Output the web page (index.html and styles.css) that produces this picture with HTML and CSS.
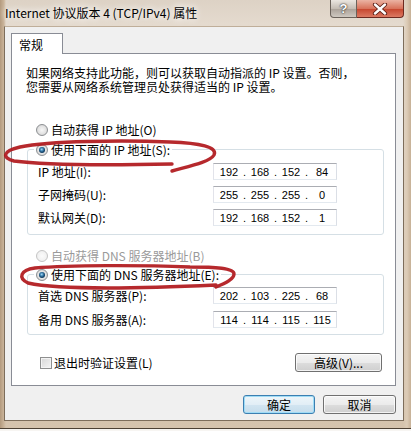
FILE: index.html
```html
<!DOCTYPE html>
<html>

<head>
    <title>Internet 协议版本 4 (TCP/IPv4) 属性</title>
    <link rel="stylesheet" href="styles.css">
</head>

<body>
    <div class="window">
        <div class="titlebar">
            <span class="title">Internet 协议版本 4 (TCP/IPv4) 属性</span>
            <div class="caption-btns">
                <span class="cap-help">?</span>
                <span class="cap-close">
                    <svg width="18" height="12" viewBox="0 0 18 12">
                        <path d="M4 1.5 L14 10.5 M14 1.5 L4 10.5" stroke="#5a1d14" stroke-width="4.2" stroke-linecap="round" />
                        <path d="M4 1.5 L14 10.5 M14 1.5 L4 10.5" stroke="#ffffff" stroke-width="2.4" stroke-linecap="round" />
                    </svg>
                </span>
            </div>
        </div>
        <div class="client">
            <div class="tabs"><span class="tab">常规</span></div>
            <div class="panel">
                <p class="intro">如果网络支持此功能，则可以获取自动指派的 IP 设置。否则，</p>
                <p class="intro next">您需要从网络系统管理员处获得适当的 IP 设置。</p>

                <div class="radio-row auto-ip"><span class="radio"></span>自动获得 IP 地址(O)</div>
                <div class="group group-ip">
                    <div class="radio-row caption"><span class="radio checked"></span>使用下面的 IP 地址(S):</div>
                    <div class="field-row first">
                        <span class="field-label">IP 地址(I):</span>
                        <span class="ip"><span class="oct">192</span><span class="dot">.</span><span class="oct">168</span><span class="dot">.</span><span class="oct">152</span><span class="dot">.</span><span class="oct">84</span></span>
                    </div>
                    <div class="field-row">
                        <span class="field-label">子网掩码(U):</span>
                        <span class="ip"><span class="oct">255</span><span class="dot">.</span><span class="oct">255</span><span class="dot">.</span><span class="oct">255</span><span class="dot">.</span><span class="oct">0</span></span>
                    </div>
                    <div class="field-row">
                        <span class="field-label">默认网关(D):</span>
                        <span class="ip"><span class="oct">192</span><span class="dot">.</span><span class="oct">168</span><span class="dot">.</span><span class="oct">152</span><span class="dot">.</span><span class="oct">1</span></span>
                    </div>
                </div>

                <div class="radio-row auto-dns disabled"><span class="radio"></span>自动获得 DNS 服务器地址(B)</div>
                <div class="group group-dns">
                    <div class="radio-row caption"><span class="radio checked"></span>使用下面的 DNS 服务器地址(E):</div>
                    <div class="field-row first">
                        <span class="field-label">首选 DNS 服务器(P):</span>
                        <span class="ip"><span class="oct">202</span><span class="dot">.</span><span class="oct">103</span><span class="dot">.</span><span class="oct">225</span><span class="dot">.</span><span class="oct">68</span></span>
                    </div>
                    <div class="field-row">
                        <span class="field-label">备用 DNS 服务器(A):</span>
                        <span class="ip"><span class="oct">114</span><span class="dot">.</span><span class="oct">114</span><span class="dot">.</span><span class="oct">115</span><span class="dot">.</span><span class="oct">115</span></span>
                    </div>
                </div>

                <div class="bottom-row">
                    <span class="check-label"><span class="checkbox"></span>退出时验证设置(L)</span>
                    <span class="btn advanced">高级(V)...</span>
                </div>
            </div>
            <div class="dialog-btns">
                <span class="btn ok">确定</span>
                <span class="btn cancel">取消</span>
            </div>
        </div>

        <!-- red marker drawn over the screenshot -->
        <svg class="marks" width="411" height="431" viewBox="0 0 411 431">
            <path d="M172,171 C190,166 210,162 214,155 C218,147 200,143 170,142 C120,140 50,141 20,147 C2,151 2,158 14,161 C50,166 120,165 172,164" />
            <path d="M216,287 C226,283 234,279 234,274 C234,268 215,267 190,267 C140,265 70,265 35,268 C20,270 18,278 28,283 C60,290 150,288 216,285" />
        </svg>
    </div>
</body>

</html>
```

FILE: styles.css
```css
html {
    --frameLight: #e4dace;
    --frameTan: #d5c3ad;
    --panelBorder: #898c95;
    --groupBorder: #d5dfe5;
    --text: #000000;
}

body {
    margin: 0;
    background: #f7f5f2;
    font-family: "Noto Sans CJK SC", "Liberation Sans", sans-serif;
    font-size: 12px;
    color: var(--text);
}

.window {
    position: relative;
    width: 411px;
    height: 429px;
    box-sizing: border-box;
    border-bottom: 1px solid #4d4134;
    background:
        linear-gradient(to right, #b39a7e 0, #cbb59b 4px, rgba(0, 0, 0, 0) 6px),
        linear-gradient(to left, #c6b096 0, #dccbb6 4px, rgba(0, 0, 0, 0) 8px),
        linear-gradient(to bottom, #ddd2c5 0, var(--frameLight) 24px, var(--frameTan) 100%);
    overflow: hidden;
}

/* title bar */

.titlebar {
    height: 26px;
    display: flex;
    justify-content: space-between;
    align-items: flex-start;
}

.title {
    padding: 5px 0 0 5px;
    font-size: 12px;
    line-height: 16px;
    text-shadow: 0 0 6px #ffffff, 0 0 10px #ffffff;
}

.caption-btns {
    display: flex;
    margin-right: 7px;
}

.cap-help,
.cap-close {
    height: 18px;
    box-sizing: border-box;
    display: flex;
    align-items: center;
    justify-content: center;
}

.cap-help {
    width: 27px;
    border: 1px solid #6b625a;
    border-top: none;
    border-radius: 0 0 0 4px;
    background: linear-gradient(#ebe6e0, #c5bdb4 50%, #a9a097 51%, #cfc8c0);
    color: #ffffff;
    font-family: "Liberation Sans", sans-serif;
    font-weight: bold;
    font-size: 13px;
    text-shadow: 0 0 2px #2d2a27, 0 0 1px #2d2a27;
}

.cap-close {
    width: 47px;
    border: 1px solid #6e2a20;
    border-top: none;
    border-left: none;
    border-radius: 0 0 4px 0;
    background: linear-gradient(#ebb3a3, #d8735b 50%, #c5442c 51%, #dc7a63);
}

/* client area */

.client {
    margin-left: 4px;
    width: 400px;
    height: 395px;
    box-sizing: border-box;
    border: 1px solid #7d6d5b;
    border-top-color: #bfae99;
    background: #f0f0f0;
}

.tabs {
    height: 26px;
    box-sizing: border-box;
    padding: 6px 0 0 6px;
}

.tab {
    position: relative;
    z-index: 1;
    display: inline-block;
    width: 52px;
    height: 21px;
    box-sizing: border-box;
    border: 1px solid var(--panelBorder);
    border-bottom: none;
    background: #ffffff;
    padding-left: 7px;
    line-height: 21px;
}

.panel {
    margin: 0 7px 0 6px;
    height: 333px;
    box-sizing: border-box;
    border: 1px solid var(--panelBorder);
    background: #ffffff;
    padding: 0 11px 0 14px;
    overflow: hidden;
}

.intro {
    margin: 12px 0 0 0;
    height: 13px;
    line-height: 13px;
    white-space: nowrap;
}

.intro.next {
    margin-top: 1px;
}

/* radios and groups */

.radio-row {
    display: flex;
    align-items: center;
    height: 16px;
    line-height: 16px;
    white-space: nowrap;
}

.auto-ip {
    margin-top: 29px;
    padding-left: 10px;
}

.auto-dns {
    margin-top: 13px;
    padding-left: 10px;
}

.disabled {
    color: #9a9a9a;
}

.radio {
    width: 12px;
    height: 12px;
    box-sizing: border-box;
    border-radius: 50%;
    border: 1px solid #8c8f92;
    background: radial-gradient(circle at 50% 50%, #f7f7f7 0, #e2e2e2 4px, #d0d0d0 6px);
    margin-right: 3px;
    display: flex;
    align-items: center;
    justify-content: center;
}

.disabled .radio {
    border-color: #c4c4c4;
    background: radial-gradient(circle at 50% 50%, #fbfbfb 0, #eeeeee 6px);
}

.radio.checked::after {
    content: "";
    width: 6px;
    height: 6px;
    border-radius: 50%;
    background: radial-gradient(circle at 45% 40%, #a9dcf4 0, #3a7fb0 1.6px, #123f63 3px);
}

.group {
    margin-left: 1px;
    width: 357px;
    box-sizing: border-box;
    border: 1px solid var(--groupBorder);
    border-radius: 3px;
}

.group-ip {
    margin-top: 11px;
    padding-bottom: 8px;
}

.group-dns {
    margin-top: 10px;
    padding-bottom: 6px;
}

.caption {
    margin: -8px 0 0 6px;
    width: max-content;
    padding: 0 2px;
    background: #ffffff;
}

.field-row {
    display: flex;
    align-items: center;
    height: 17px;
    padding-left: 10px;
    margin-top: 6px;
}

.group-dns .field-row {
    margin-top: 7px;
}

.group .field-row.first {
    margin-top: 5px;
}

.group-dns .field-row.first {
    margin-top: 4px;
}

.field-label {
    width: 175px;
    white-space: nowrap;
}

.ip {
    width: 124px;
    height: 17px;
    box-sizing: border-box;
    border: 1px solid #abadb3;
    border-color: #abadb3 #dbdfe6 #e3e9ef #e2e3ea;
    display: flex;
    align-items: center;
    padding-left: 3px;
    font-family: "Liberation Sans", sans-serif;
    font-size: 11px;
}

.oct {
    width: 24px;
    text-align: center;
}

.dot {
    width: 7px;
    text-align: center;
}

/* bottom */

.bottom-row {
    margin-top: 18px;
    height: 19px;
    display: flex;
    justify-content: space-between;
    align-items: center;
}

.check-label {
    display: flex;
    align-items: center;
    margin-left: 14px;
}

.checkbox {
    width: 12px;
    height: 12px;
    box-sizing: border-box;
    border: 1px solid #8e8f8f;
    background: linear-gradient(135deg, #d6d6d6, #f4f4f4);
    box-shadow: inset 0 0 0 1px #f3f3f3;
    margin-right: 2px;
}

.btn {
    height: 19px;
    box-sizing: border-box;
    border: 1px solid #707070;
    border-radius: 3px;
    background: linear-gradient(#f4f4f4 0, #ebebeb 50%, #dddddd 51%, #cfcfcf 100%);
    box-shadow: inset 0 0 0 1px rgba(255, 255, 255, 0.75);
    display: flex;
    align-items: center;
    justify-content: center;
    line-height: 17px;
}

.advanced {
    width: 87px;
    margin-right: 2px;
}

.dialog-btns {
    margin-top: 9px;
    padding-right: 7px;
    display: flex;
    justify-content: flex-end;
    gap: 8px;
}

.ok {
    width: 72px;
    border-color: #3c7fb1;
    box-shadow: inset 0 0 0 1px #9fdcf6;
    background: linear-gradient(#eef6fa 0, #e2eef6 50%, #d2e5f1 51%, #c6ddec 100%);
}

.cancel {
    width: 73px;
}

.marks {
    position: absolute;
    top: 0;
    left: 0;
    z-index: 5;
    pointer-events: none;
}

.marks path {
    fill: none;
    stroke: #b0171b;
    stroke-width: 3.4;
    stroke-linecap: round;
    stroke-linejoin: round;
    opacity: 0.92;
}
```
